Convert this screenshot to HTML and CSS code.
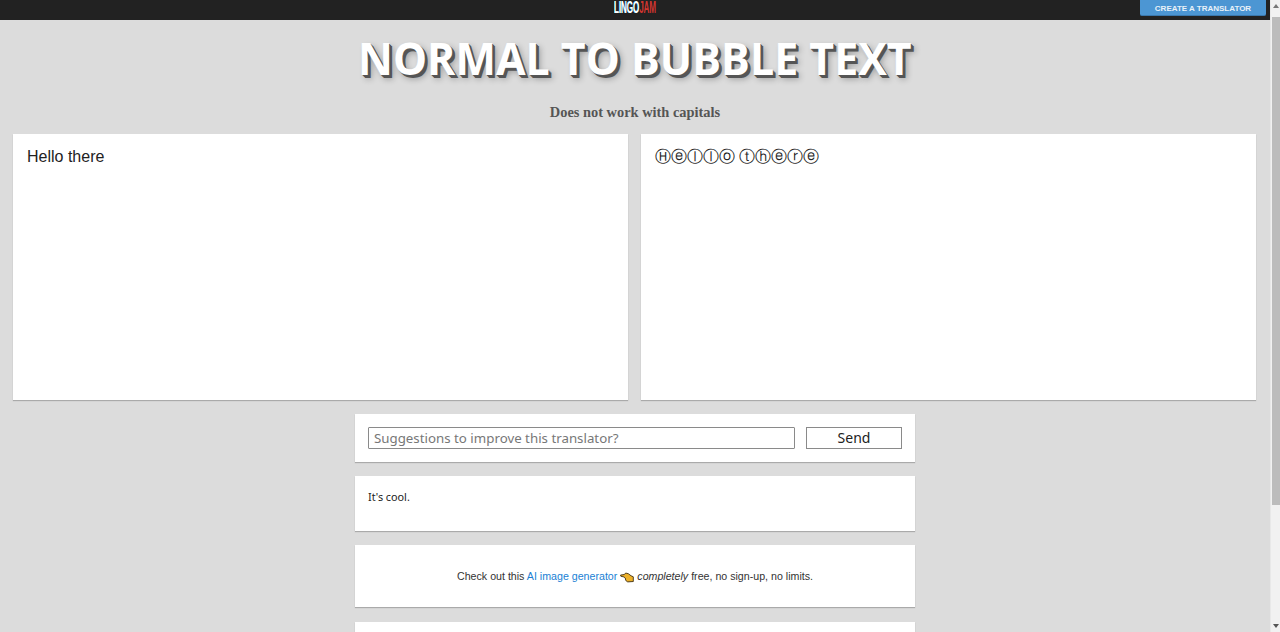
FILE: index.html
```
<!DOCTYPE html>
<html lang="en">
<head>
<meta charset="utf-8">
<title>Normal to Bubble Text</title>
<link rel="stylesheet" href="styles.css">
</head>
<body>
<div class="page">
  <header class="topbar">
    <a class="logo"><span class="logo-a">LINGO</span><span class="logo-b">JAM</span></a>
    <a class="create">CREATE A TRANSLATOR</a>
  </header>
  <main class="content">
    <h1 class="title">NORMAL TO BUBBLE TEXT</h1>
    <p class="subtitle">Does not work with capitals</p>
    <section class="panels">
      <div class="panel panel-in">Hello there</div>
      <div class="panel panel-out">Ⓗⓔⓛⓛⓞ ⓣⓗⓔⓡⓔ</div>
    </section>
    <section class="card suggest">
      <div class="fake-input">Suggestions to improve this translator?</div>
      <div class="send">Send</div>
    </section>
    <section class="card comment">It's cool.</section>
    <section class="card promo">
      <span>Check out this <a class="link">AI image generator</a></span>
      <svg class="hand" viewBox="0 0 16 12" width="14" height="11" aria-hidden="true"><path d="M0.6 3.2 L5 2.6 L6.4 0.9 L9.4 1.6 L12.6 4 L15.2 5.2 L15.2 10.6 L8.8 11 L6.6 9.4 L6 6.6 L4.6 5.4 L1 4.6 Z" fill="#edb12a" stroke="#3a2c10" stroke-width="1" stroke-linejoin="round"/></svg>
      <span><em>completely</em> free, no sign-up, no limits.</span>
    </section>
    <section class="card last"></section>
  </main>
  <aside class="scrollbar">
    <span class="arrow-up"></span>
    <span class="thumb"></span>
    <span class="arrow-down"></span>
  </aside>
</div>
</body>
</html>
```
FILE: styles.css
```
* { box-sizing: border-box; }
html, body { margin: 0; height: 100%; overflow: hidden; }
body { background: #dcdcdc; font-family: "Liberation Sans", Arial, sans-serif; color: #222; }
.page { height: 632px; overflow: hidden; position: relative; }
.topbar { height: 20px; margin-right: 10px; background: #222; display: flex; justify-content: center; position: relative; }
.logo { display: block; font-family: "Liberation Sans", sans-serif; font-weight: 700; font-size: 16px; line-height: 16px; letter-spacing: -0.3px; transform: scaleX(.51); transform-origin: center; }
.logo-a { color: #fff; text-shadow: -1px 0 0 #39a0d8; }
.logo-b { color: #d1352f; }
.create { position: absolute; right: 4px; top: 0; width: 126px; height: 16px; background: #4c96d3; color: #e8f1f8; font-size: 8px; font-weight: 700; line-height: 17px; text-align: center; border-bottom: 1px solid #3a78ad; border-radius: 0 0 2px 2px; }
.content { width: 1270px; display: flex; flex-direction: column; align-items: center; }
.title { margin: 13px 0 0; height: 50px; font-family: "Open Sans", sans-serif; font-size: 44px; line-height: 50px; font-weight: 700; color: #fff; white-space: nowrap; transform: scaleX(.975); text-shadow: 1px 1px 0 #555, 2px 2px 0 #555, 3px 3px 0 #555, 4px 4px 6px rgba(0,0,0,.3); }
.subtitle { margin: 21px 0 0; height: 20px; font-family: "Liberation Serif", serif; font-size: 14.4px; line-height: 16px; font-weight: 700; color: #555; }
.panels { width: 100%; padding: 0 14px 0 13px; display: grid; grid-template-columns: 615px 615px; column-gap: 13px; margin-top: 10px; }
.panel { height: 266px; background: #fff; box-shadow: 0 1px 1px #aaa; padding: 13px 14px; }
.panel-in { font-size: 16px; line-height: 19px; color: #222; }
.panel-out { font-family: "Liberation Sans", "DejaVu Sans", sans-serif; font-size: 15.5px; line-height: 19px; color: #222; }
.card { width: 560px; background: #fff; box-shadow: 0 1px 1px #aaa; }
.suggest { height: 48px; margin-top: 14px; padding: 13px; display: flex; gap: 11px; }
.fake-input { width: 427px; height: 22px; border: 1px solid #8a8a8a; border-radius: 1px; padding: 0 5px; font-family: "Noto Sans", sans-serif; font-size: 13.3px; line-height: 20px; color: #777; }
.send { width: 96px; height: 22px; border: 1px solid #8a8a8a; font-family: "Noto Sans", sans-serif; font-size: 14px; line-height: 20px; text-align: center; color: #222; }
.comment { height: 55px; margin-top: 14px; padding: 13px; font-family: "Noto Sans", sans-serif; font-size: 10.8px; line-height: 15px; color: #222; }
.promo { height: 62px; margin-top: 14px; display: flex; align-items: center; justify-content: center; gap: 3px; font-size: 10.65px; color: #333; }
.link { color: #1a7fd4; }
.hand { flex: none; margin-top: 3px; }
.last { height: 60px; margin-top: 15px; }
.scrollbar { position: absolute; right: 0; top: 0; width: 10px; height: 632px; background: #f1f1f1; border-left: 1px solid #e8e8e8; }
.thumb { position: absolute; left: 1px; right: 0; top: 17px; height: 488px; background: #bcbcbc; }
.arrow-up { position: absolute; left: 2px; top: 4px; border: 3px solid transparent; border-top: 0; border-bottom: 4px solid #777; }
.arrow-down { position: absolute; left: 2px; bottom: 4px; border: 3px solid transparent; border-bottom: 0; border-top: 4px solid #555; }
```
